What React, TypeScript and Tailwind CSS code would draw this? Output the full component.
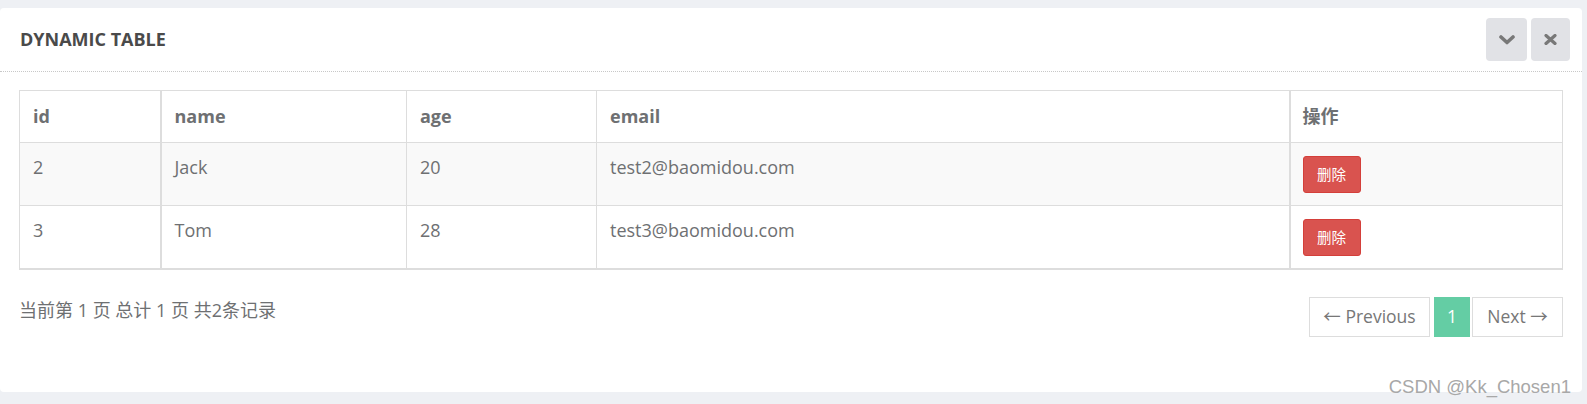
import React from "react";

const ROWS = [
  { id: 2, name: "Jack", age: 20, email: "test2@baomidou.com" },
  { id: 3, name: "Tom", age: 28, email: "test3@baomidou.com" },
];

const FONT = "font-['Open_Sans','Noto_Sans_CJK_SC',sans-serif]";

export default function App() {
  return (
    <div className={`relative min-h-screen bg-[#eef0f4] pt-2 pr-[5px] pb-3 ${FONT}`}>
      <div className="h-[384px] rounded-[4px] bg-white">
        {/* title bar */}
        <div className="flex h-[64px] items-center justify-between border-b border-dotted border-[#c8c8c8] pl-5 pr-3">
          <h5 className="text-[18px] font-bold uppercase text-[#4a4a4a]">Dynamic Table</h5>
          <div className="flex gap-1 self-start pt-[10px]">
            <button className="flex h-[43px] w-[41px] items-center justify-center rounded-[4px] bg-[#e1e2e6]">
              <svg width="16" height="10" viewBox="0 0 16 10">
                <path d="M2 2 L8 7.5 L14 2" fill="none" stroke="#787878" strokeWidth="3.6" strokeLinecap="round" strokeLinejoin="round" />
              </svg>
            </button>
            <button className="flex h-[43px] w-[39px] items-center justify-center rounded-[4px] bg-[#e1e2e6]">
              <svg width="13" height="11" viewBox="0 0 13 11">
                <path d="M2 1.5 L11 9.5 M11 1.5 L2 9.5" fill="none" stroke="#787878" strokeWidth="3.2" strokeLinecap="round" />
              </svg>
            </button>
          </div>
        </div>

        {/* content */}
        <div className="px-[19px] pt-[18px]">
          <table className="w-full border-collapse border border-b-2 border-[#dddddd] text-left text-[18px] text-[#6e7072]">
            <thead>
              <tr className="h-[52px]">
                <th className="w-[141px] border border-[#dddddd] border-r-2 px-[13px] align-middle font-bold">id</th>
                <th className="w-[246px] border border-[#dddddd] px-[13px] align-middle font-bold">name</th>
                <th className="w-[190px] border border-[#dddddd] px-[13px] align-middle font-bold">age</th>
                <th className="w-[693px] border border-[#dddddd] border-r-2 px-[13px] align-middle font-bold">email</th>
                <th className="border border-[#dddddd] px-[12px] align-middle font-bold">操作</th>
              </tr>
            </thead>
            <tbody>
              {ROWS.map((r, i) => (
                <tr key={r.id} className={`h-[63px] ${i % 2 === 0 ? "bg-[#f9f9f9]" : "bg-white"}`}>
                  <td className="border border-[#dddddd] border-r-2 px-[13px] pt-[11px] align-top">{r.id}</td>
                  <td className="border border-[#dddddd] px-[13px] pt-[11px] align-top">{r.name}</td>
                  <td className="border border-[#dddddd] px-[13px] pt-[11px] align-top">{r.age}</td>
                  <td className="border border-[#dddddd] border-r-2 px-[13px] pt-[11px] align-top">{r.email}</td>
                  <td className="border border-[#dddddd] px-[12px] pt-[13px] align-top">
                    <button className="flex h-[37px] w-[58px] items-center justify-center rounded-[3px] border border-[#d43f3a] bg-[#d9534f] text-[14.5px] text-white">
                      删除
                    </button>
                  </td>
                </tr>
              ))}
            </tbody>
          </table>

          <div className="mt-[27px] flex items-start justify-between">
            <div className="text-[18px] text-[#6e7072]">当前第 1 页 总计 1 页 共2条记录</div>
            <div className="flex gap-[2px] text-[17.5px] text-[#777777]">
              <a className="flex h-[40px] w-[121px] items-center justify-center border border-[#dddddd]">← Previous</a>
              <a className="flex h-[40px] w-[38px] items-center justify-center border-l-2 border-white bg-[#64cda4] text-white">1</a>
              <a className="flex h-[40px] w-[91px] items-center justify-center border border-[#dddddd]">Next →</a>
            </div>
          </div>
        </div>
      </div>

      <div className="absolute right-[16px] top-[373px] font-['Liberation_Sans',sans-serif] text-[18.5px] text-[#a8a8a8]">
        CSDN @Kk_Chosen1
      </div>
    </div>
  );
}
